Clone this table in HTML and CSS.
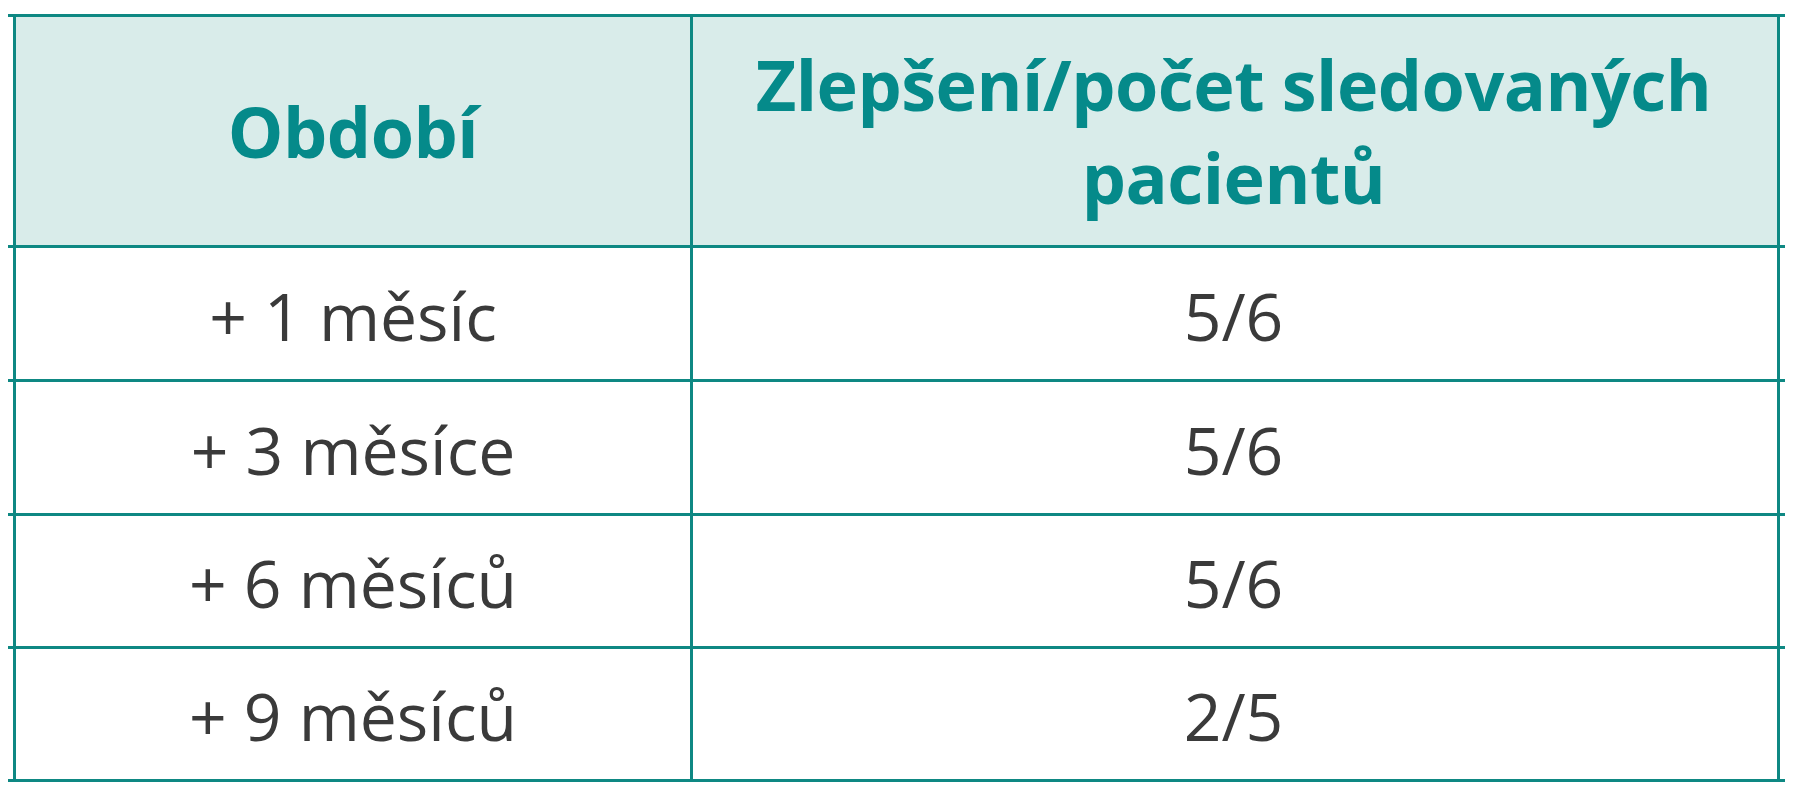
FILE: index.html
```html
<!DOCTYPE html>
<html lang="cs">
<head>
<meta charset="utf-8">
<title>Tabulka</title>
<link rel="stylesheet" href="styles.css">
</head>
<body>
<div class="table">
  <div class="rule"></div>
  <div class="row head">
    <div class="cell c1">Období</div>
    <div class="cell c2">Zlepšení/počet sledovaných<br>pacientů</div>
  </div>
  <div class="rule"></div>
  <div class="row r131">
    <div class="cell c1">+ 1 měsíc</div>
    <div class="cell c2">5/6</div>
  </div>
  <div class="rule"></div>
  <div class="row r131">
    <div class="cell c1">+ 3 měsíce</div>
    <div class="cell c2">5/6</div>
  </div>
  <div class="rule"></div>
  <div class="row r130">
    <div class="cell c1">+ 6 měsíců</div>
    <div class="cell c2">5/6</div>
  </div>
  <div class="rule"></div>
  <div class="row r130">
    <div class="cell c1">+ 9 měsíců</div>
    <div class="cell c2">2/5</div>
  </div>
  <div class="rule"></div>
</div>
</body>
</html>
```

FILE: styles.css
```css
html, body {
  margin: 0;
  padding: 0;
  background: #ffffff;
}

body {
  padding: 14px 0 0 8px;
  font-family: "Open Sans", "Noto Sans", sans-serif;
}

.table {
  width: 1777px;
  display: flex;
  flex-direction: column;
}

.rule {
  height: 3px;
  background: #0e8883;
}

.row {
  margin: 0 5px;
  display: grid;
  grid-template-columns: 677px 1081px;
  border-left: 3px solid #0e8883;
  border-right: 3px solid #0e8883;
}

.cell {
  display: flex;
  align-items: center;
  justify-content: center;
  text-align: center;
}

.c1 {
  border-right: 3px solid #0e8883;
}

.head {
  height: 228px;
  background: #d9ecea;
}

.head .cell {
  color: #058a8a;
  font-weight: 700;
  font-size: 70px;
  line-height: 93px;
  letter-spacing: -0.5px;
}

.r131 { height: 131px; }
.r130 { height: 130px; }

.r131 .cell, .r130 .cell {
  color: #3a3a3a;
  font-size: 66px;
  line-height: 1;
  padding-top: 2px;
}
```
